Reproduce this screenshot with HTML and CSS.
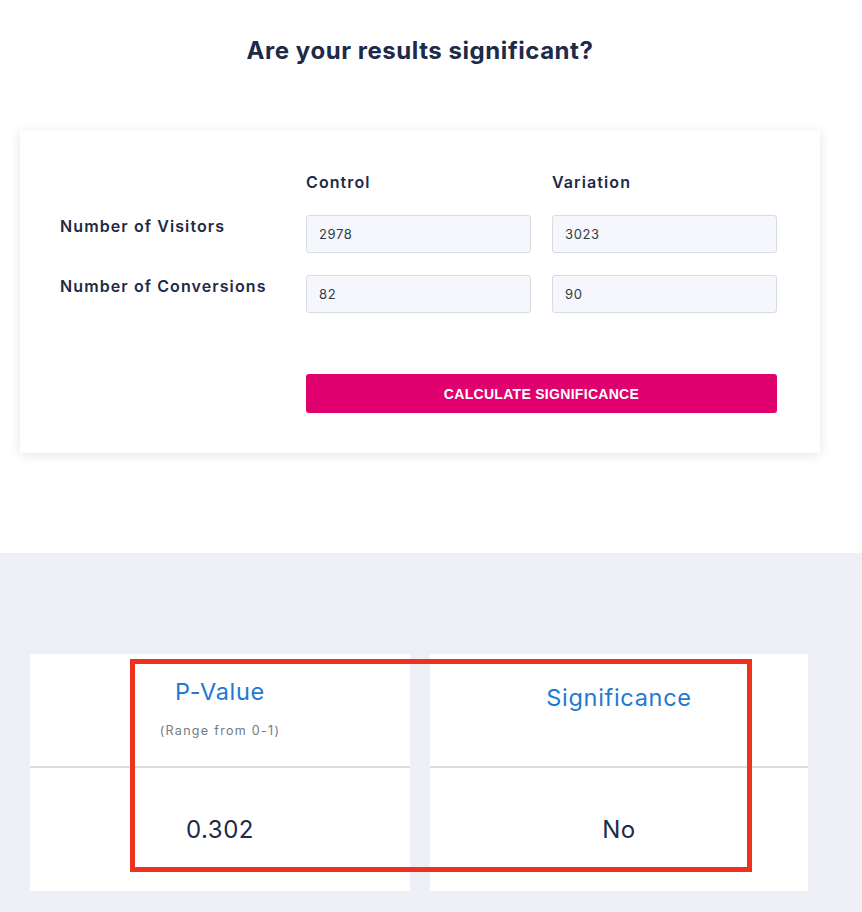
FILE: index.html
```html
<!DOCTYPE html>
<html lang="en">
<head>
<meta charset="utf-8">
<title>Significance calculator</title>
<link rel="stylesheet" href="styles.css">
</head>
<body>
<section class="calc">
  <h1 class="title">Are your results significant?</h1>
  <div class="card">
    <div class="grid">
      <div class="cell"></div>
      <div class="colhead">Control</div>
      <div class="colhead">Variation</div>
      <div class="label">Number of Visitors</div>
      <div class="field">2978</div>
      <div class="field">3023</div>
      <div class="label">Number of Conversions</div>
      <div class="field">82</div>
      <div class="field">90</div>
      <div class="cell"></div>
      <button class="btn">CALCULATE SIGNIFICANCE</button>
    </div>
  </div>
</section>
<section class="results">
  <div class="panels">
    <div class="panel">
      <div class="phead">
        <div class="ptitle">P-Value</div>
        <div class="psub">(Range from 0-1)</div>
      </div>
      <div class="pbody">0.302</div>
    </div>
    <div class="panel">
      <div class="phead">
        <div class="ptitle ptitle-low">Significance</div>
      </div>
      <div class="pbody">No</div>
    </div>
    <div class="highlight"></div>
  </div>
</section>
</body>
</html>
```

FILE: styles.css
```css
* { box-sizing: border-box; }
html, body { margin: 0; padding: 0; }
body {
  font-family: "Inter", "Liberation Sans", sans-serif;
  color: #1d2a48;
  background: #fff;
  width: 862px;
}
.calc {
  width: 840px;
  padding-top: 36px;
  padding-bottom: 100px;
}
.title {
  margin: 0 0 64px;
  text-align: center;
  font-size: 24px;
  line-height: 30px;
  font-weight: 700;
  letter-spacing: 0.55px;
  color: #1d2a48;
}
.card {
  margin: 0 20px;
  background: #fff;
  box-shadow: 0 2px 10px rgba(30, 40, 70, 0.12);
  padding: 41px 43px 40px 40px;
}
.grid {
  display: grid;
  grid-template-columns: 225px 225px 225px;
  column-gap: 21px;
  row-gap: 22px;
}
.colhead,
.label {
  font-size: 16px;
  line-height: 22px;
  font-weight: 600;
  letter-spacing: 1.1px;
  color: #1d2a48;
  white-space: nowrap;
}
.field {
  height: 38px;
  background: #f5f7fc;
  border: 1px solid #d6dae1;
  border-radius: 3px;
  padding: 0 12px;
  display: flex;
  align-items: center;
  font-size: 13px;
  letter-spacing: 0.6px;
  color: #333b48;
}
.btn {
  grid-column: 2 / 4;
  margin-top: 39px;
  height: 39px;
  border: 0;
  border-radius: 3px;
  background: #e0006e;
  color: #fff;
  font-family: "Liberation Sans", Arial, sans-serif;
  font-weight: 700;
  font-size: 14px;
  letter-spacing: 0.3px;
  padding: 0;
}
.results {
  background: #eff0f5;
  padding: 101px 0 21px;
}
.panels {
  position: relative;
  width: 840px;
  padding: 0 32px 0 30px;
  display: grid;
  grid-template-columns: 380px 378px;
  column-gap: 20px;
}
.panel {
  background: #fff;
}
.phead {
  height: 114px;
  border-bottom: 2px solid #d9dfe1;
  text-align: center;
  padding-top: 24px;
}
.ptitle {
  font-size: 23.5px;
  line-height: 28px;
  color: #2179d3;
  letter-spacing: 0.7px;
}
.ptitle-low {
  padding-top: 6px;
}
.psub {
  margin-top: 17px;
  font-size: 12.5px;
  line-height: 16px;
  letter-spacing: 1.3px;
  color: #737a85;
}
.pbody {
  height: 123px;
  text-align: center;
  padding-top: 47px;
  font-size: 24px;
  line-height: 30px;
  letter-spacing: 0.5px;
  color: #1d2a48;
}
.highlight {
  position: absolute;
  left: 130px;
  top: 5px;
  width: 622px;
  height: 213px;
  border: 5px solid #ef3220;
  pointer-events: none;
}
```
